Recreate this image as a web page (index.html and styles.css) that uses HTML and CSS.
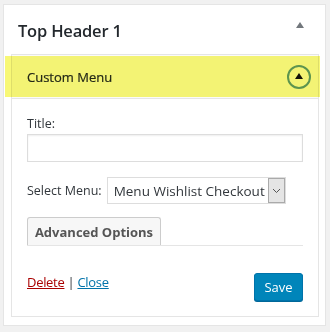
FILE: index.html
```html
<!DOCTYPE html>
<html>
<head>
<meta charset="utf-8">
<link rel="stylesheet" href="styles.css">
</head>
<body>
<div class="panel">
  <div class="panel-head">
    <h2 class="panel-title">Top Header 1</h2>
    <span class="panel-toggle"></span>
  </div>
  <div class="widget">
    <div class="widget-top">
      <span class="widget-name">Custom Menu</span>
      <span class="widget-toggle"><span class="tri"></span></span>
    </div>
    <div class="widget-inside">
      <label class="field-label">Title:</label>
      <div class="text-input"></div>
      <div class="select-row">
        <span class="select-label">Select Menu:</span>
        <div class="select">
          <span class="select-value">Menu Wishlist Checkout</span>
          <span class="select-arrow">
            <svg width="9" height="6" viewBox="0 0 9 6"><path d="M1 1 L4.5 4.5 L8 1" fill="none" stroke="#555" stroke-width="1"/></svg>
          </span>
        </div>
      </div>
      <div class="adv-row">
        <span class="adv-btn">Advanced Options</span>
      </div>
      <div class="actions">
        <div class="links"><a class="del">Delete</a> | <a class="close">Close</a></div>
        <span class="save">Save</span>
      </div>
    </div>
  </div>
  <div class="highlight"></div>
</div>
</body>
</html>
```
FILE: styles.css
```css
html, body { margin: 0; padding: 0; }
body {
  background: #f1f1f1;
  width: 330px;
  height: 332px;
  font-family: "Open Sans", "Noto Sans", sans-serif;
  color: #32373c;
  font-size: 12.5px;
}
.panel {
  position: relative;
  box-sizing: border-box;
  margin: 4px 0 0 3px;
  width: 323px;
  height: 322px;
  background: #fff;
  border: 1px solid #e5e5e5;
}
.panel-head {
  display: flex;
  align-items: center;
  justify-content: space-between;
  height: 49px;
  padding: 0 21px 0 14px;
}
.panel-title {
  margin: 0;
  font-size: 16.5px;
  font-weight: 600;
  color: #23282d;
  letter-spacing: -0.2px;
  padding-top: 1px;
}
.panel-toggle {
  width: 0; height: 0;
  border-left: 4px solid transparent;
  border-right: 4px solid transparent;
  border-bottom: 6px solid #72777c;
  margin-top: -9px;
}
.widget {
  box-sizing: border-box;
  margin: 0 6px 0 7px;
  height: 263px;
  border: 1px solid #e5e5e5;
  background: #fff;
}
.widget-top {
  display: flex;
  align-items: center;
  justify-content: space-between;
  height: 43px;
  border-bottom: 1px solid #e5e5e5;
  padding: 0 7px 0 15px;
  background: #fafafa;
}
.widget-name {
  font-size: 13px;
  color: #23282d;
  font-weight: 400;
  -webkit-text-stroke: 0.2px #23282d;
}
.widget-toggle {
  box-sizing: border-box;
  width: 24px;
  height: 24px;
  border-radius: 50%;
  border: 2px solid #5f98a8;
  display: flex;
  align-items: center;
  justify-content: center;
}
.tri {
  width: 0; height: 0;
  border-left: 4px solid transparent;
  border-right: 4px solid transparent;
  border-bottom: 6px solid #111;
  margin-top: -2px;
}
.widget-inside {
  padding: 16px 15px 0 15px;
}
.field-label {
  display: block;
  line-height: 18px;
  color: #32373c;
}
.text-input {
  box-sizing: border-box;
  margin-top: 1px;
  height: 28px;
  border: 1px solid #ddd;
  box-shadow: inset 0 1px 2px rgba(0,0,0,0.07);
  background: #fff;
}
.select-row {
  display: flex;
  align-items: center;
  margin-top: 15px;
}
.select-label {
  margin-right: 5px;
}
.select {
  box-sizing: border-box;
  display: flex;
  align-items: center;
  height: 27px;
  width: 179px;
  border: 1px solid #ddd;
  padding-left: 6px;
  background: #fff;
}
.select-value {
  flex: 1;
  font-size: 13.5px;
  color: #32373c;
  white-space: nowrap;
  overflow: hidden;
}
.select-arrow {
  box-sizing: border-box;
  width: 17px;
  height: 25px;
  background: #e5e5e5;
  border: 1px solid #aaa;
  display: flex;
  align-items: center;
  justify-content: center;
}
.adv-row {
  margin-top: 13px;
  border-bottom: 1px solid #e5e5e5;
  height: 28px;
}
.adv-btn {
  box-sizing: border-box;
  display: inline-flex;
  align-items: center;
  justify-content: center;
  width: 134px;
  height: 28px;
  background: #f7f7f7;
  border: 1px solid #ccc;
  border-bottom: none;
  border-radius: 3px 3px 0 0;
  font-weight: 700;
  font-size: 13px;
  color: #555;
}
.actions {
  display: flex;
  justify-content: space-between;
  align-items: flex-start;
  margin-top: 26px;
}
.links {
  color: #32373c;
  line-height: 18px;
  padding-top: 1px;
  font-size: 13px;
  letter-spacing: -0.3px;
}
.del { color: #a00; text-decoration: underline; }
.close { color: #0073aa; text-decoration: underline; }
.save {
  box-sizing: border-box;
  display: inline-flex;
  align-items: center;
  justify-content: center;
  width: 49px;
  height: 28px;
  margin-top: 1px;
  background: #0085ba;
  border: 1px solid #0073aa;
  border-radius: 3px;
  box-shadow: 0 1px 0 #006799;
  color: #fff;
  font-size: 13px;
}
.highlight {
  position: absolute;
  left: 1px;
  top: 51px;
  width: 315px;
  height: 41px;
  background: rgb(248, 248, 118);
  mix-blend-mode: multiply;
  filter: blur(0.6px);
  pointer-events: none;
}
```
